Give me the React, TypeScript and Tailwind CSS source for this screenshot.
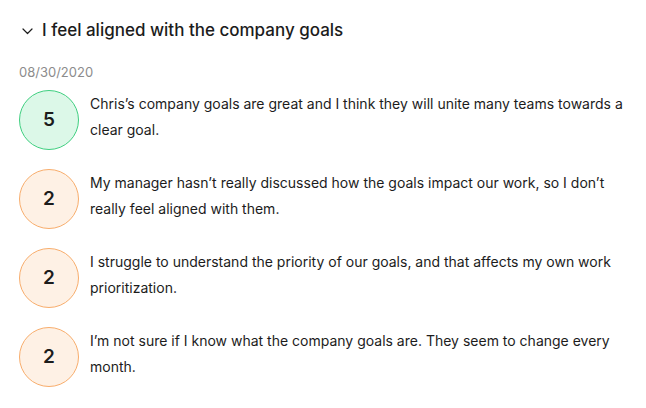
import React from 'react';

type Answer = {
  score: number;
  text: string;
};

const answers: Answer[] = [
  {
    score: 5,
    text: 'Chris’s company goals are great and I think they will unite many teams towards a clear goal.',
  },
  {
    score: 2,
    text: 'My manager hasn’t really discussed how the goals impact our work, so I don’t really feel aligned with them.',
  },
  {
    score: 2,
    text: 'I struggle to understand the priority of our goals, and that affects my own work prioritization.',
  },
  {
    score: 2,
    text: 'I’m not sure if I know what the company goals are. They seem to change every month.',
  },
];

function ScoreBubble({ score }: { score: number }) {
  const good = score >= 4;
  return (
    <div
      className={
        good
          ? 'w-[60px] h-[60px] shrink-0 rounded-full border border-[#3fcf80] bg-[#dcf8e8] flex items-center justify-center'
          : 'w-[60px] h-[60px] shrink-0 rounded-full border border-[#f8ad6c] bg-[#fef1e5] flex items-center justify-center'
      }
    >
      <span className="text-[19px] font-semibold text-[#1c1c1c]">{score}</span>
    </div>
  );
}

export default function App() {
  return (
    <div
      className="w-[646px] h-[408px] bg-white pl-[19px] pt-[20px] text-[#1c1c1c]"
      style={{ fontFamily: 'Inter, "Noto Sans", sans-serif' }}
    >
      <div className="flex items-center h-[22px]">
        <svg width="11" height="7" viewBox="0 0 11 7" className="ml-[3px] mr-[9px]" fill="none">
          <path d="M1 1l4.5 4.5L10 1" stroke="#1c1c1c" strokeWidth="1.2" strokeLinecap="round" strokeLinejoin="round" />
        </svg>
        <h2 className="text-[17px] font-medium">I feel aligned with the company goals</h2>
      </div>

      <div className="mt-[22px] text-[13px] text-[#8c8c8c] leading-[16px]">08/30/2020</div>

      <div className="mt-[10px] flex flex-col gap-[19px]">
        {answers.map((a, i) => (
          <div key={i} className="flex gap-[11px]">
            <ScoreBubble score={a.score} />
            <p className="w-[540px] pt-[1px] text-[14px] leading-[26px]">{a.text}</p>
          </div>
        ))}
      </div>
    </div>
  );
}
